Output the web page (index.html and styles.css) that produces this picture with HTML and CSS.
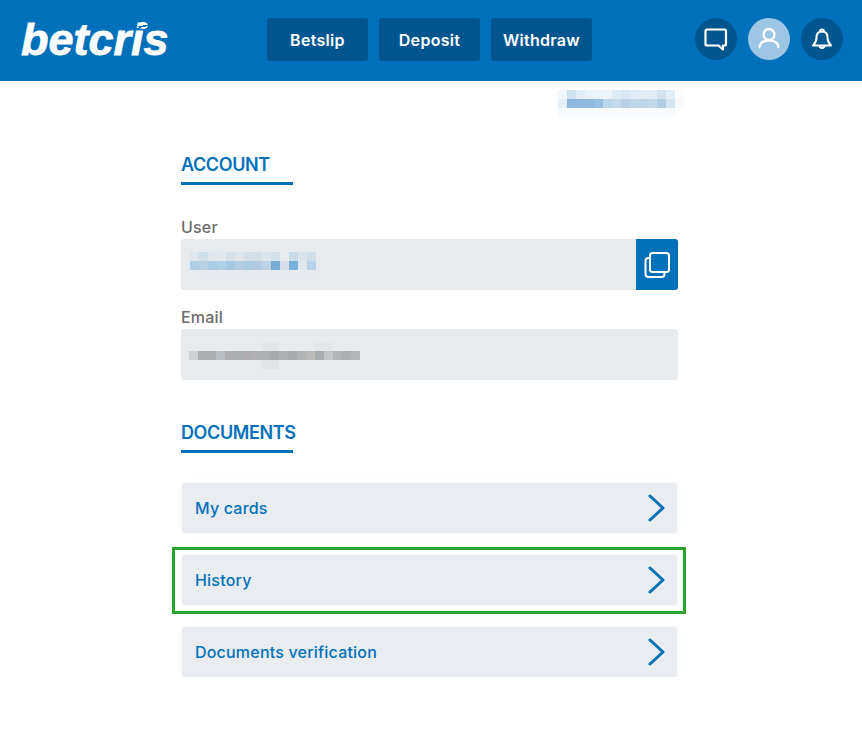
FILE: index.html
```html
<!DOCTYPE html>
<html lang="en">
<head>
    <meta charset="UTF-8">
    <meta name="viewport" content="width=device-width, initial-scale=1.0">
    <title>betcris - Account</title>
    <link rel="stylesheet" href="styles.css">
</head>
<body>
    <header class="topbar">
        <a class="logo" href="#">betcris<span class="logo-dot"></span></a>
        <nav class="topnav">
            <a class="topnav-btn" href="#">Betslip</a>
            <a class="topnav-btn" href="#">Deposit</a>
            <a class="topnav-btn" href="#">Withdraw</a>
        </nav>
        <div class="topicons">
            <a class="round-btn" href="#">
                <svg width="24" height="24" viewBox="0 0 24 24" fill="none" stroke="#fff" stroke-width="2.200" stroke-linejoin="round"><path d="M3.500 2.500h17a1.500 1.500 0 0 1 1.500 1.500v13a1.500 1.500 0 0 1-1.500 1.500h-1.500v4l-4.500-4h-11.500a1.500 1.500 0 0 1-1.500-1.500v-13a1.500 1.500 0 0 1 1.500-1.500z"/></svg>
            </a>
            <a class="round-btn round-btn-active" href="#">
                <svg width="24" height="24" viewBox="0 0 24 24" fill="none" stroke="#fff" stroke-width="2.300" stroke-linecap="round"><circle cx="12" cy="7.500" r="5.500"/><path d="M2.500 20c.5-4 4-6.500 9.500-6.500s9 2.500 9.500 6.500"/></svg>
            </a>
            <a class="round-btn" href="#">
                <svg width="24" height="24" viewBox="0 0 24 24" fill="none" stroke="#fff" stroke-width="2" stroke-linejoin="round"><path d="M12 4.500c-3.800 0-5.500 2.800-5.500 6.300 0 3.700-1.500 5.700-3.500 7.700h18c-2-2-3.500-4-3.500-7.700 0-3.500-1.700-6.300-5.500-6.300z"/><path d="M10 4.500a2 2 0 0 1 4 0"/><path d="M9.500 18.500c0 3.300 5 3.300 5 0"/></svg>
            </a>
        </div>
    </header>

    <main class="content">
        <div class="balance-row">
            <svg class="blur" width="126" height="26" shape-rendering="crispEdges">
                <rect x="0" width="9" height="9" fill="#f0f6fb"/><rect x="9" width="9" height="9" fill="#cde2f1"/><rect x="18" width="9" height="9" fill="#e1edf6"/><rect x="27" width="9" height="9" fill="#e8f2f9"/><rect x="36" width="9" height="9" fill="#eaf3f9"/><rect x="45" width="9" height="9" fill="#edf4f9"/><rect x="54" width="9" height="9" fill="#dfebf5"/><rect x="63" width="9" height="9" fill="#d8e7f3"/><rect x="72" width="9" height="9" fill="#e0ebf5"/><rect x="81" width="9" height="9" fill="#e2edf6"/><rect x="90" width="9" height="9" fill="#e3edf6"/><rect x="99" width="9" height="9" fill="#d5e3f0"/><rect x="108" width="9" height="9" fill="#e2eef7"/><rect x="117" width="9" height="9" fill="#fafcfe"/>
                <rect x="0" y="9" width="9" height="9" fill="#e6f0f8"/><rect x="9" y="9" width="36" height="9" fill="#8eb9dc"/><rect x="36" y="9" width="9" height="9" fill="#98bede"/><rect x="45" y="9" width="9" height="9" fill="#b9d6ea"/><rect x="54" y="9" width="9" height="9" fill="#c5d8ea"/><rect x="63" y="9" width="9" height="9" fill="#b7d0e7"/><rect x="72" y="9" width="18" height="9" fill="#bdd6ea"/><rect x="90" y="9" width="9" height="9" fill="#c0d8ea"/><rect x="99" y="9" width="9" height="9" fill="#b0cfe7"/><rect x="108" y="9" width="9" height="9" fill="#d3e4f2"/><rect x="117" y="9" width="9" height="9" fill="#f7fafd"/>
                <rect x="0" y="18" width="117" height="8" fill="#f8fbfd"/>
            </svg>
        </div>

        <h2 class="section-title section-account">ACCOUNT</h2>

        <label class="field-label field-label-first">User</label>
        <div class="field">
            <svg class="blur" width="126" height="27" shape-rendering="crispEdges">
                <rect x="0" width="9" height="9" fill="#dfe6ed"/><rect x="9" width="9" height="9" fill="#cfdfea"/><rect x="18" width="9" height="9" fill="#dfe6ed"/><rect x="27" width="9" height="9" fill="#e0e7ed"/><rect x="36" width="9" height="9" fill="#d4e1ea"/><rect x="45" width="9" height="9" fill="#dfe5eb"/><rect x="54" width="18" height="9" fill="#d3e0e9"/><rect x="72" width="9" height="9" fill="#dde5ec"/><rect x="81" width="9" height="9" fill="#d3e0e9"/><rect x="99" width="9" height="9" fill="#c9dbe9"/><rect x="108" width="9" height="9" fill="#d8e3eb"/><rect x="117" width="9" height="9" fill="#cfe0ea"/>
                <rect x="0" y="9" width="9" height="9" fill="#afcfe6"/><rect x="9" y="9" width="9" height="9" fill="#b9d1e5"/><rect x="18" y="9" width="9" height="9" fill="#a8cbe3"/><rect x="27" y="9" width="9" height="9" fill="#add0e5"/><rect x="36" y="9" width="9" height="9" fill="#a4c8e2"/><rect x="45" y="9" width="9" height="9" fill="#b0cbe2"/><rect x="54" y="9" width="9" height="9" fill="#a9cbe4"/><rect x="63" y="9" width="9" height="9" fill="#b1c9e1"/><rect x="72" y="9" width="9" height="9" fill="#bdd2e5"/><rect x="81" y="9" width="9" height="9" fill="#76aed6"/><rect x="90" y="9" width="9" height="9" fill="#d8dfea"/><rect x="99" y="9" width="9" height="9" fill="#7ab1da"/><rect x="108" y="9" width="9" height="9" fill="#dfe6ee"/><rect x="117" y="9" width="9" height="9" fill="#b9d2e8"/>
                <rect x="9" y="18" width="117" height="9" fill="#e6eaee"/>
            </svg>
            <button class="copy-btn">
                <svg width="28" height="28" viewBox="0 0 28 28" fill="none" stroke="#fff" stroke-width="2"><rect x="7" y="2" width="19" height="19" rx="2.500"/><path d="M7 7h-1.500a3 3 0 0 0-3 3v13a3 3 0 0 0 3 3h13a3 3 0 0 0 3-3v-2"/></svg>
            </button>
        </div>

        <label class="field-label">Email</label>
        <div class="field field-email">
            <svg class="blur" width="171" height="27" shape-rendering="crispEdges">
                <rect x="72" width="18" height="9" fill="#e4e6ea"/><rect x="126" width="18" height="9" fill="#e4e7ea"/>
                <rect x="0" y="9" width="9" height="9" fill="#cfd0d1"/><rect x="9" y="9" width="18" height="9" fill="#adaeb1"/><rect x="27" y="9" width="9" height="9" fill="#b9bfc5"/><rect x="36" y="9" width="9" height="9" fill="#aeaeb1"/><rect x="45" y="9" width="9" height="9" fill="#aaaeb1"/><rect x="54" y="9" width="9" height="9" fill="#aeacae"/><rect x="63" y="9" width="9" height="9" fill="#aeb0b3"/><rect x="72" y="9" width="9" height="9" fill="#adb1b5"/><rect x="81" y="9" width="9" height="9" fill="#a7a9ac"/><rect x="90" y="9" width="9" height="9" fill="#aeb1b4"/><rect x="99" y="9" width="9" height="9" fill="#a8abae"/><rect x="108" y="9" width="9" height="9" fill="#b2b4b7"/><rect x="117" y="9" width="9" height="9" fill="#bcbab9"/><rect x="126" y="9" width="9" height="9" fill="#a7acaf"/><rect x="135" y="9" width="9" height="9" fill="#c3c4c9"/><rect x="144" y="9" width="9" height="9" fill="#b3b5b8"/><rect x="153" y="9" width="9" height="9" fill="#adb0b3"/><rect x="162" y="9" width="9" height="9" fill="#b1b5b8"/>
                <rect x="72" y="18" width="18" height="9" fill="#e1e4e7"/>
            </svg>
        </div>

        <h2 class="section-title section-documents">DOCUMENTS</h2>

        <div class="link-list">
            <a class="link-row" href="#">
                My cards
                <svg width="18" height="28" viewBox="0 0 18 28" fill="none" stroke="#0070bb" stroke-width="3" stroke-linecap="round" stroke-linejoin="round"><path d="M2 2l13 12-13 12"/></svg>
            </a>
            <a class="link-row link-row-marked" href="#">
                History
                <svg width="18" height="28" viewBox="0 0 18 28" fill="none" stroke="#0070bb" stroke-width="3" stroke-linecap="round" stroke-linejoin="round"><path d="M2 2l13 12-13 12"/></svg>
            </a>
            <a class="link-row" href="#">
                Documents verification
                <svg width="18" height="28" viewBox="0 0 18 28" fill="none" stroke="#0070bb" stroke-width="3" stroke-linecap="round" stroke-linejoin="round"><path d="M2 2l13 12-13 12"/></svg>
            </a>
        </div>
    </main>
</body>
</html>
```

FILE: styles.css
```css
* {
    box-sizing: border-box;
}

body {
    margin: 0;
    font-family: Inter, "Noto Sans", sans-serif;
    background-color: #fff;
}

a {
    text-decoration: none;
}

.topbar {
    display: flex;
    align-items: flex-start;
    height: 81px;
    padding: 18px 19px 0 21px;
    background-color: #0070bb;
}

.logo {
    position: relative;
    width: 246px;
    margin-top: -4px;
    font-family: "Liberation Sans", sans-serif;
    font-size: 45px;
    font-weight: bold;
    font-style: italic;
    line-height: 52px;
    color: #fff;
    -webkit-text-stroke: 0.8px #fff;
}

.logo-dot {
    position: absolute;
    left: 117px;
    top: 8px;
    width: 10px;
    height: 7px;
    border-radius: 50%;
    background: linear-gradient(170deg, #fff 50%, #0070bb 50%, #0070bb 68%, #fff 68%);
}

.topnav {
    display: flex;
    gap: 11px;
}

.topnav-btn {
    display: flex;
    align-items: center;
    justify-content: center;
    width: 101px;
    height: 43px;
    border-radius: 3px;
    background-color: #02568f;
    color: #fff;
    font-size: 16px;
    font-weight: 600;
    letter-spacing: 0.3px;
}

.topicons {
    display: flex;
    gap: 11px;
    margin-left: auto;
}

.round-btn {
    display: flex;
    align-items: center;
    justify-content: center;
    width: 42px;
    height: 42px;
    border-radius: 50%;
    background-color: #02568f;
}

.round-btn-active {
    background-color: #9cc6e4;
}

.content {
    width: 497px;
    margin-left: 181px;
    padding-top: 9px;
}

.balance-row {
    display: flex;
    justify-content: flex-end;
    margin-right: -6px;
}

.blur {
    display: block;
}

.field .blur {
    margin-top: 1px;
}

.field-email .blur {
    margin-left: -1px;
}

.section-title {
    width: 112px;
    margin: 0;
    padding: 1px 0 7px;
    border-bottom: 3px solid #0070bb;
    color: #0070bb;
    font-size: 18px;
    font-weight: 600;
    line-height: 20px;
    letter-spacing: -0.4px;
    white-space: nowrap;
}

.section-account {
    margin-top: 38px;
}

.section-documents {
    margin-top: 42px;
}

.field-label {
    display: block;
    margin: 17px 0 2px;
    color: #6b6b6b;
    font-size: 16px;
    font-weight: 500;
    line-height: 20px;
    letter-spacing: 0.2px;
}

.field-label-first {
    margin-top: 32px;
}

.field {
    display: flex;
    align-items: center;
    justify-content: space-between;
    height: 51px;
    padding-left: 9px;
    border-radius: 3px;
    background-color: #e8ebee;
}

.copy-btn {
    display: flex;
    align-items: center;
    justify-content: center;
    width: 42px;
    height: 51px;
    padding: 0;
    border: none;
    border-radius: 0 3px 3px 0;
    background-color: #0070bb;
}

.link-list {
    display: flex;
    flex-direction: column;
    gap: 22px;
    margin: 30px 1px 0;
}

.link-row {
    position: relative;
    display: flex;
    align-items: center;
    justify-content: space-between;
    height: 50px;
    padding: 0 11px 0 13px;
    border-radius: 3px;
    background-color: #e9ecf0;
    box-shadow: 0 0 6px rgba(0, 0, 0, 0.06);
    color: #0070bb;
    font-size: 16px;
    font-weight: 500;
    letter-spacing: 0.2px;
}

.link-row-marked::after {
    content: "";
    position: absolute;
    top: -8px;
    right: -9px;
    bottom: -9px;
    left: -10px;
    border: 3px solid #2ba42b;
}
```
